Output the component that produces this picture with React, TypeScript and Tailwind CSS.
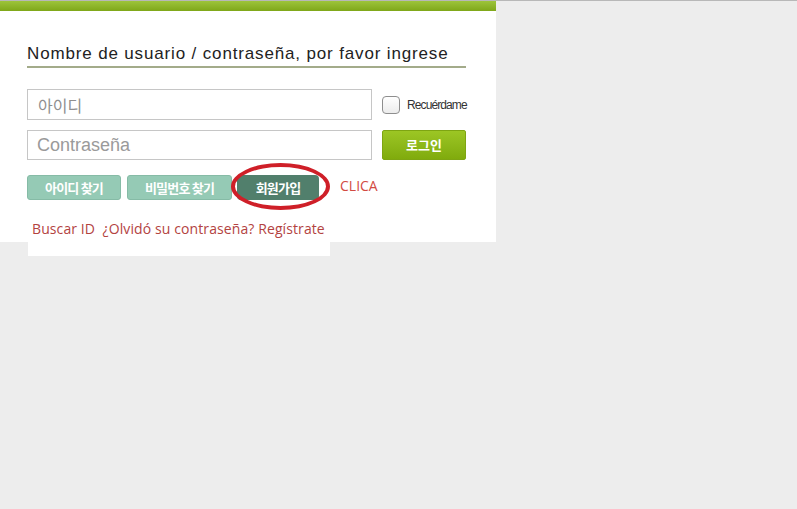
import { useState } from "react";

const kr = "font-['Noto_Sans_CJK_KR',sans-serif]";

const App = () => {
  const [remember, setRemember] = useState(false);

  return (
    <div className="w-[797px] h-[509px] bg-[#ededed] border-t border-[#b8b8b8] overflow-hidden">
      <div className="w-[496px] bg-white">
        {/* top green strip */}
        <div className="h-[10px] bg-gradient-to-b from-[#9dc43a] to-[#7fa718]" />

        <div className="pl-[27px] pt-[33px] pb-[3px]">
          <div className="w-[439px] h-[24px] border-b-2 border-[#a3ab8a]">
            <h1 className="font-['Liberation_Sans',sans-serif] text-[17px] leading-[20px] tracking-[0.85px] text-[#222]">
              Nombre de usuario / contraseña, por favor ingrese
            </h1>
          </div>

          {/* id row */}
          <div className="mt-[21px] w-[441px] h-[31px] flex items-center overflow-hidden">
            <input
              placeholder="아이디"
              className={`w-[345px] h-[31px] shrink-0 border border-[#c6c6c6] px-[10px] text-[16px] outline-none placeholder:text-[#8f8f8f] ${kr}`}
            />
            <label className="ml-[10px] flex items-center whitespace-nowrap">
              <input
                type="checkbox"
                checked={remember}
                onChange={() => setRemember(!remember)}
                className="appearance-none w-[18px] h-[18px] shrink-0 rounded-[4px] border border-[#8e8e8e] bg-gradient-to-b from-white to-[#ececec]"
              />
              <span className="ml-[7px] font-['Liberation_Sans',sans-serif] text-[12px] tracking-[-0.9px] text-[#333]">
                Recuérdame
              </span>
            </label>
          </div>

          {/* password row */}
          <div className="mt-[10px] flex items-center">
            <input
              type="password"
              placeholder="Contraseña"
              className="w-[345px] h-[30px] border border-[#c6c6c6] px-[9px] font-['Liberation_Sans',sans-serif] text-[18px] outline-none placeholder:text-[#9a9a9a]"
            />
            <button
              className={`ml-[10px] w-[84px] h-[30px] rounded-[2px] border border-[#7ea512] bg-gradient-to-b from-[#9cc624] to-[#80ab0c] text-white text-[13px] font-bold ${kr}`}
            >
              로그인
            </button>
          </div>

          {/* buttons row */}
          <div className="mt-[15px] flex items-center h-[25px]">
            <button
              className={`w-[94px] h-[25px] rounded-[3px] border border-[#86bba6] bg-[#95cab5] text-white text-[13px] font-bold tracking-[-0.8px] ${kr}`}
            >
              아이디 찾기
            </button>
            <button
              className={`ml-[6px] w-[105px] h-[25px] rounded-[3px] border border-[#86bba6] bg-[#95cab5] text-white text-[13px] font-bold tracking-[-0.8px] ${kr}`}
            >
              비밀번호 찾기
            </button>
            <div className="relative ml-[5px]">
              <button
                className={`w-[82px] h-[25px] rounded-[4px] bg-[#517f6c] text-white text-[13px] font-bold tracking-[-0.8px] ${kr}`}
              >
                회원가입
              </button>
              <div className="absolute left-[-6px] top-[-12px] w-[99px] h-[47px] rounded-[50%] border-[4px] border-[#cf1f28] pointer-events-none" />
            </div>
            <span className="ml-[21px] -mt-[4px] font-['Open_Sans',sans-serif] text-[14px] text-[#d24a42]">
              CLICA
            </span>
          </div>

          <p className="mt-[19px] pl-[5px] font-['Open_Sans',sans-serif] text-[14px] leading-[20px] tracking-[0.1px] text-[#b3433f] whitespace-pre">
            Buscar ID  ¿Olvidó su contraseña? Regístrate
          </p>
        </div>
      </div>
      <div className="ml-[28px] w-[302px] h-[14px] bg-white" />
    </div>
  );
};

export default App;
